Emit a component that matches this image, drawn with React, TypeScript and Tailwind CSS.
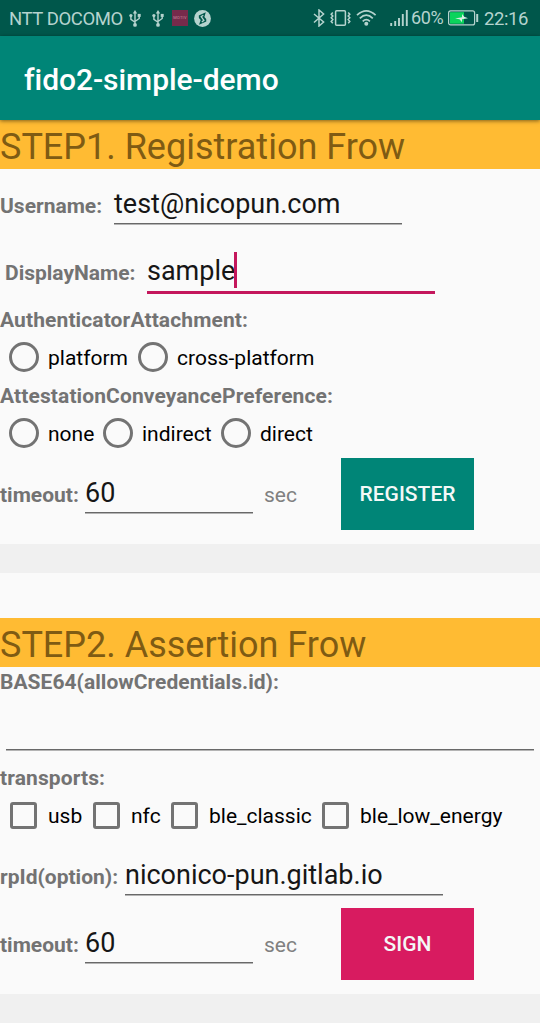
import type { ReactNode } from "react";

function UsbIcon() {
  return (
    <svg className="h-[17px] w-3 shrink-0" viewBox="0 0 12 17" fill="none" stroke="currentColor" strokeWidth="1.4">
      <path d="M6 14V2.5M6 12.300 1.900 9.300V6M6 11.500 10.200 8.500V5.500" />
      <path d="M6 0 8.200 3.400H3.800Z" fill="currentColor" stroke="none" />
      <circle cx="6" cy="14.900" r="1.900" fill="currentColor" stroke="none" />
      <circle cx="1.900" cy="5.600" r="1.600" fill="currentColor" stroke="none" />
      <path d="M8.700 3.900h3v3h-3z" fill="currentColor" stroke="none" />
    </svg>
  );
}

function StatusBar() {
  return (
    <div className="flex h-9 items-center bg-[#00574b] pl-[9px] text-[19px] leading-9 text-[#b5d3ce]">
      <span className="w-[120px] shrink-0 pt-[2px] text-[18.5px] tracking-[-0.4px] whitespace-nowrap">NTT DOCOMO</span>
      <UsbIcon />
      <span className="w-[11px] shrink-0" />
      <UsbIcon />
      <span className="ml-2 flex h-4 w-4 shrink-0 items-center justify-center bg-[#762b4b] text-[4px] leading-none tracking-[0.3px] text-[#c48ba1]">
        MOTIV
      </span>
      <svg className="ml-[6px] h-[17px] w-[17px] shrink-0" viewBox="0 0 17 17">
        <circle cx="8.5" cy="8.5" r="8.4" fill="currentColor" />
        <path d="M11.800 2.200 4.800 5.400 4.900 8 6.700 9.900 5 14.800 12.300 11.600 12.200 9 10.400 7.100Z" fill="#00574b" />
        <path d="M9.300 5.200 7.200 6.700 9.900 10.300 7.800 11.900" fill="none" stroke="currentColor" strokeWidth="1.300" />
      </svg>
      <div className="flex-1" />
      <svg className="h-[18px] w-[96px] shrink-0" viewBox="0 0 96 18" fill="none" stroke="currentColor" strokeWidth="1.5">
        <path d="M2 5 11.6 13 7 17V1l4.600 4L2 13.500" />
        <rect x="23.600" y="1.700" width="9.800" height="14.600" rx="1" />
        <path d="M20.800 3.500 19.200 5.200 20.800 7 19.200 8.800 20.800 10.600 19.200 12.400 20.800 14.200M36.200 3.500 37.800 5.200 36.200 7 37.800 8.800 36.200 10.600 37.800 12.400 36.200 14.200" />
        <path d="M45 6.200Q54.300-2.500 63.600 6.200M47.800 9.400Q54.300 3 60.800 9.400M50.700 12.300Q54.300 8.800 57.900 12.300" strokeWidth="1.700" />
        <circle cx="54.300" cy="14.700" r="2" fill="currentColor" stroke="none" />
        <path d="M79.200 17v-3M83.200 17v-5M87 17V9M90.800 17V5M94.800 17V1" strokeWidth="1.900" />
      </svg>
      <span className="ml-[3px] w-[37px] shrink-0 text-[18px] tracking-[-0.4px]">60%</span>
      <svg className="h-4 w-[31px] shrink-0" viewBox="0 0 31 16" fill="none" stroke="currentColor">
        <rect x=".6" y=".9" width="26" height="14" rx="2" strokeWidth="1.200" />
        <rect x="2" y="2.200" width="14" height="11.500" fill="#0bd45c" stroke="none" />
        <path d="M29.200 4v8" strokeWidth="2" />
        <path d="M7 8.600 14 7.200V4L16.200 6.800 20 8.200 14 9.300V12.300L11.500 9.300Z" fill="#d7eee4" stroke="none" />
      </svg>
      <span className="ml-[5px] w-[56px] shrink-0 pt-[2px] text-[18.5px] tracking-[-0.4px]">22:16</span>
    </div>
  );
}

function StepTitle({ children }: { children: ReactNode }) {
  return (
    <h2 className="h-[49px] bg-[#ffbb33] text-[36px] leading-[54px] font-normal whitespace-nowrap text-[#7f5b13]">
      {children}
    </h2>
  );
}

function Label({ children, className = "tracking-[0.11px]" }: { children: ReactNode; className?: string }) {
  return (
    <span
      className={`block shrink-0 text-[21px] leading-7 font-bold whitespace-nowrap text-[#737373] ${className}`}
    >
      {children}
    </span>
  );
}

function Field({ value, className, focused = false }: { value: string; className: string; focused?: boolean }) {
  return (
    <div
      className={`flex shrink-0 items-baseline text-[27px] leading-[38px] text-[#161616] ${
        focused
          ? "h-[42px] border-b-[3px] border-[#c4175c]"
          : "h-[39px] border-b border-[#686868] shadow-[0_1px_0_#b4b4b4]"
      } ${className}`}
    >
      <span>{value}</span>
      {focused && <span className="-ml-px h-9 w-[3px] self-start bg-[#c4175c]" />}
    </div>
  );
}

function Radio({ label, className }: { label: string; className: string }) {
  return (
    <label className={`flex shrink-0 items-start gap-[9px] ${className}`}>
      <span className="h-[30px] w-[30px] shrink-0 rounded-full border-3 border-[#737373]" />
      <span className="text-[21px] leading-8 whitespace-nowrap text-black">{label}</span>
    </label>
  );
}

function Checkbox({ label, className }: { label: string; className: string }) {
  return (
    <label className={`flex shrink-0 items-start gap-[11px] ${className}`}>
      <span className="h-[27px] w-[27px] shrink-0 rounded-[3px] border-3 border-[#737373]" />
      <span className="text-[21px] leading-[29px] whitespace-nowrap text-black">{label}</span>
    </label>
  );
}

function TimeoutRow({ action, className }: { action: string; className: string }) {
  return (
    <div className="flex h-[72px]">
      <div className="flex w-[341px] shrink-0 items-baseline pt-4">
        <Label className="w-[85px]">timeout:</Label>
        <Field value="60" className="w-[168px]" />
        <span className="ml-[11px] text-[21px] text-[#808080]">sec</span>
      </div>
      <button className={`h-[72px] w-[133px] pt-[2px] text-[21px] font-medium text-[#f4f8f7] ${className}`}>
        {action}
      </button>
    </div>
  );
}

export default function App() {
  return (
    <div className="h-[1023px] w-[540px] overflow-hidden bg-[#f0f0f0] font-[Roboto,sans-serif]">
      <StatusBar />
      <header className="relative flex h-[84px] items-center bg-[#008577] pt-[3px] pl-6 shadow-[0_1px_4px_rgba(0,0,0,0.5)]">
        <h1 className="text-[30px] leading-9 font-medium tracking-[-0.05px] text-white">fido2-simple-demo</h1>
      </header>

      <section className="h-[424px] bg-[#fafafa]">
        <StepTitle>STEP1. Registration Frow</StepTitle>
        <div className="flex h-[83px] items-baseline pt-4">
          <Label className="w-[114px]">Username:</Label>
          <Field value="test@nicopun.com" className="w-[288px]" />
        </div>
        <div className="flex h-[54px] items-baseline pl-[5px]">
          <Label className="w-[142px]">DisplayName:</Label>
          <Field value="sample" className="w-[288px]" focused />
        </div>
        <Label>AuthenticatorAttachment:</Label>
        <div className="flex h-[48px] pt-2 pl-[9px]">
          <Radio label="platform" className="w-[129px]" />
          <Radio label="cross-platform" className="" />
        </div>
        <Label>AttestationConveyancePreference:</Label>
        <div className="flex h-[48px] pt-2 pl-[9px]">
          <Radio label="none" className="w-[94px]" />
          <Radio label="indirect" className="w-[118px]" />
          <Radio label="direct" className="" />
        </div>
        <TimeoutRow action="REGISTER" className="bg-[#008577]" />
      </section>

      <section className="mt-[29px] h-[421px] bg-[#fafafa] pt-[45px]">
        <StepTitle>STEP2. Assertion Frow</StepTitle>
        <div className="pt-px">
          <Label className="tracking-[0.04px]">BASE64(allowCredentials.id):</Label>
        </div>
        <div className="mx-[6px] h-[54px] border-b border-[#686868] shadow-[0_1px_0_#b4b4b4]" />
        <div className="pt-[14px]">
          <Label>transports:</Label>
        </div>
        <div className="flex h-16 items-start pt-[10px] pl-[10px]">
          <Checkbox label="usb" className="w-[83px]" />
          <Checkbox label="nfc" className="w-[78px]" />
          <Checkbox label="ble_classic" className="w-[151px]" />
          <Checkbox label="ble_low_energy" className="" />
        </div>
        <div className="flex h-[52px] items-baseline">
          <Label className="w-[125px]">rpId(option):</Label>
          <Field value="niconico-pun.gitlab.io" className="w-[318px]" />
        </div>
        <TimeoutRow action="SIGN" className="bg-[#d81b60]" />
      </section>
    </div>
  );
}
